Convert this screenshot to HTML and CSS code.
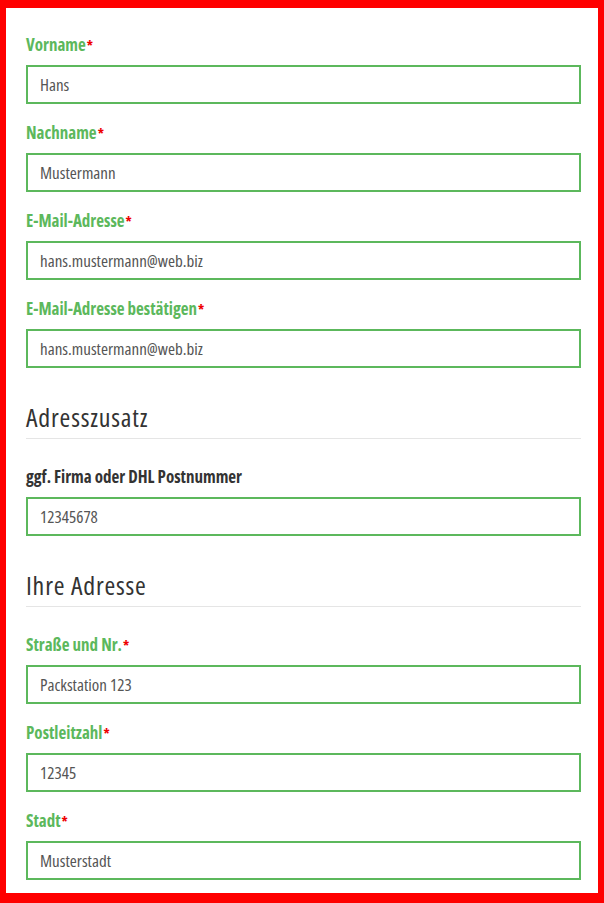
FILE: index.html
```html
<!DOCTYPE html>
<html lang="de">
<head>
<meta charset="utf-8">
<title>Formular</title>
<link rel="stylesheet" href="styles.css">
</head>
<body>
<div class="frame">
  <form class="form">
    <div class="group">
      <label class="label req">Vorname<span class="star">*</span></label>
      <div class="input">Hans</div>
    </div>
    <div class="group">
      <label class="label req">Nachname<span class="star">*</span></label>
      <div class="input">Mustermann</div>
    </div>
    <div class="group">
      <label class="label req">E-Mail-Adresse<span class="star">*</span></label>
      <div class="input">hans.mustermann@web.biz</div>
    </div>
    <div class="group">
      <label class="label req">E-Mail-Adresse bestätigen<span class="star">*</span></label>
      <div class="input">hans.mustermann@web.biz</div>
    </div>

    <h3 class="heading">Adresszusatz</h3>
    <div class="group">
      <label class="label">ggf. Firma oder DHL Postnummer</label>
      <div class="input">12345678</div>
    </div>

    <h3 class="heading">Ihre Adresse</h3>
    <div class="group">
      <label class="label req">Straße und Nr.<span class="star">*</span></label>
      <div class="input">Packstation 123</div>
    </div>
    <div class="group">
      <label class="label req">Postleitzahl<span class="star">*</span></label>
      <div class="input">12345</div>
    </div>
    <div class="group">
      <label class="label req">Stadt<span class="star">*</span></label>
      <div class="input">Musterstadt</div>
    </div>
  </form>
</div>
</body>
</html>
```
FILE: styles.css
```css
html, body {
  margin: 0;
  padding: 0;
  background: #ff0000;
}
body {
  width: 604px;
  height: 903px;
  overflow: hidden;
  font-family: "Open Sans", "DejaVu Sans Condensed", sans-serif;
  font-stretch: 75%;
}
.frame {
  box-sizing: border-box;
  width: 604px;
  height: 903px;
  border-style: solid;
  border-color: #ff0000;
  border-width: 8px 6px 10px 6px;
  background: #fff;
  padding: 27px 17px 0 20px;
}
.form {
  display: flex;
  flex-direction: column;
}
.group {
  display: flex;
  flex-direction: column;
  margin-bottom: 19px;
}
.label {
  display: block;
  height: 20px;
  font-size: 17px;
  line-height: 20px;
  font-weight: 700;
  font-stretch: 75%;
  color: #333;
  margin-bottom: 10px;
}
.label.req {
  color: #5cb85c;
}
.star {
  color: #ee0000;
  margin-left: 1px;
  font-size: 14px;
  line-height: 1;
}
.input {
  box-sizing: border-box;
  height: 39px;
  border: 2px solid #5cb85c;
  padding: 0 12px;
  font-size: 17px;
  line-height: 35px;
  font-stretch: 75%;
  color: #555;
}
.heading {
  font-weight: 400;
  font-size: 26px;
  line-height: 30px;
  font-stretch: 75%;
  letter-spacing: 0.8px;
  color: #333;
  margin: 15px 0 28px 0;
  padding-bottom: 6px;
  border-bottom: 1px solid #e5e5e5;
}
```
